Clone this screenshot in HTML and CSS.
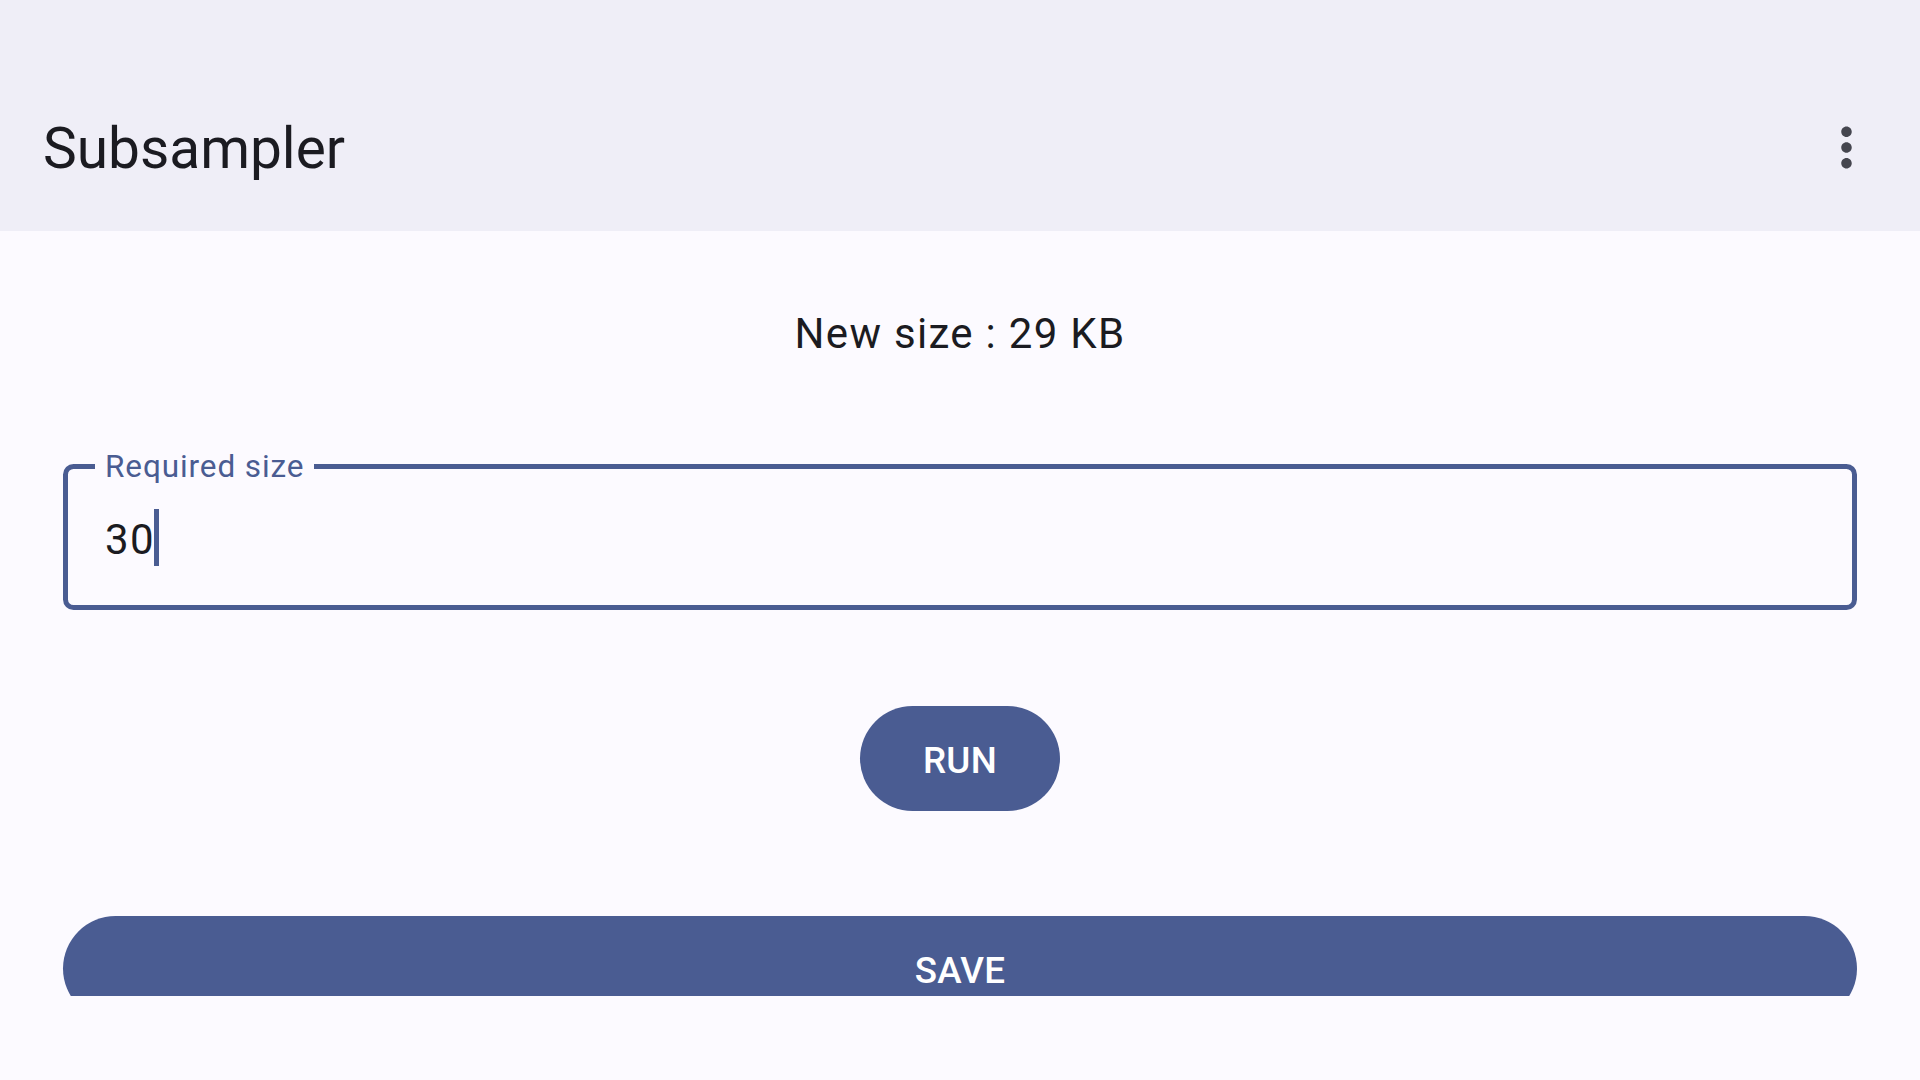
FILE: index.html
```html
<!DOCTYPE html>
<html lang="en">
<head>
<meta charset="utf-8">
<title>Subsampler</title>
<link rel="stylesheet" href="styles.css">
</head>
<body>
<div class="screen">
  <header class="app-bar">
    <div class="toolbar">
      <h1 class="title">Subsampler</h1>
      <button class="icon-btn" aria-label="More options">
        <svg viewBox="0 0 24 24" width="63" height="63"><path fill="currentColor" d="M12 8c1.1 0 2-.9 2-2s-.9-2-2-2-2 .9-2 2 .9 2 2 2zm0 2c-1.1 0-2 .9-2 2s.9 2 2 2 2-.9 2-2-.9-2-2-2zm0 6c-1.1 0-2 .9-2 2s.9 2 2 2 2-.9 2-2-.9-2-2-2z"/></svg>
      </button>
    </div>
  </header>
  <main class="content">
    <p class="new-size">New size : 29 KB</p>
    <fieldset class="field">
      <legend class="field-label">Required size</legend>
      <div class="field-input"><span class="value">30</span><span class="caret"></span></div>
    </fieldset>
    <button class="btn btn-run">RUN</button>
    <button class="btn btn-save">SAVE</button>
  </main>
  <div class="nav-space"></div>
</div>
</body>
</html>
```

FILE: styles.css
```css
* { box-sizing: border-box; }
html, body {
  margin: 0;
  padding: 0;
  width: 1920px;
  height: 1080px;
  overflow: hidden;
  background: #fcfaff;
  font-family: Roboto, "Noto Sans", "Liberation Sans", sans-serif;
  color: #1b1b21;
}
.screen {
  display: flex;
  flex-direction: column;
  height: 1080px;
}
.app-bar {
  background: #efeef7;
  height: 231px;
  padding-top: 63px;
  flex: none;
}
.toolbar {
  height: 168px;
  display: flex;
  align-items: center;
  justify-content: space-between;
  padding: 0 42px 0 43px;
}
.title {
  margin: 0;
  font-size: 56.8px;
  font-weight: 400;
  line-height: 68px;
  padding-top: 4px;
  color: #1b1b21;
}
.icon-btn {
  border: 0;
  background: none;
  padding: 0;
  width: 63px;
  height: 63px;
  color: #45464f;
  display: flex;
}
.content {
  height: 765px;
  flex: none;
  overflow: hidden;
  display: flex;
  flex-direction: column;
  align-items: stretch;
  padding: 78px 63px 0;
}
.new-size {
  margin: 0;
  text-align: center;
  font-size: 42px;
  line-height: 49px;
  letter-spacing: 1.3px;
  color: #1b1b21;
}
.field {
  margin: 90px 0 0;
  padding: 0;
  border: 5px solid #4a5c92;
  border-radius: 10.5px;
  min-width: 0;
}
.field-label {
  margin-left: 27px;
  padding: 0 10px;
  font-size: 31.5px;
  line-height: 37px;
  letter-spacing: 0.9px;
  color: #4a5c92;
}
.field-input {
  padding: 24px 0 35px 37px;
  font-size: 42px;
  line-height: 61px;
  letter-spacing: 1.3px;
  color: #1b1b21;
  display: flex;
  align-items: flex-start;
}
.caret {
  display: inline-block;
  width: 5px;
  height: 57px;
  background: #4a5c92;
  margin-left: -1px;
}
.btn {
  border: 0;
  background: #4a5c92;
  color: #ffffff;
  font-family: Roboto, "Noto Sans", "Liberation Sans", sans-serif;
  font-size: 36.75px;
  font-weight: 500;
  letter-spacing: 0.26px;
  height: 105px;
  padding: 3px 0 0;
  border-radius: 52.5px;
  display: flex;
  align-items: center;
  justify-content: center;
  flex: none;
}
.btn-run {
  align-self: center;
  width: 200px;
  margin-top: 96px;
}
.btn-save {
  margin-top: 105px;
}
.nav-space {
  flex: 1;
}
```
